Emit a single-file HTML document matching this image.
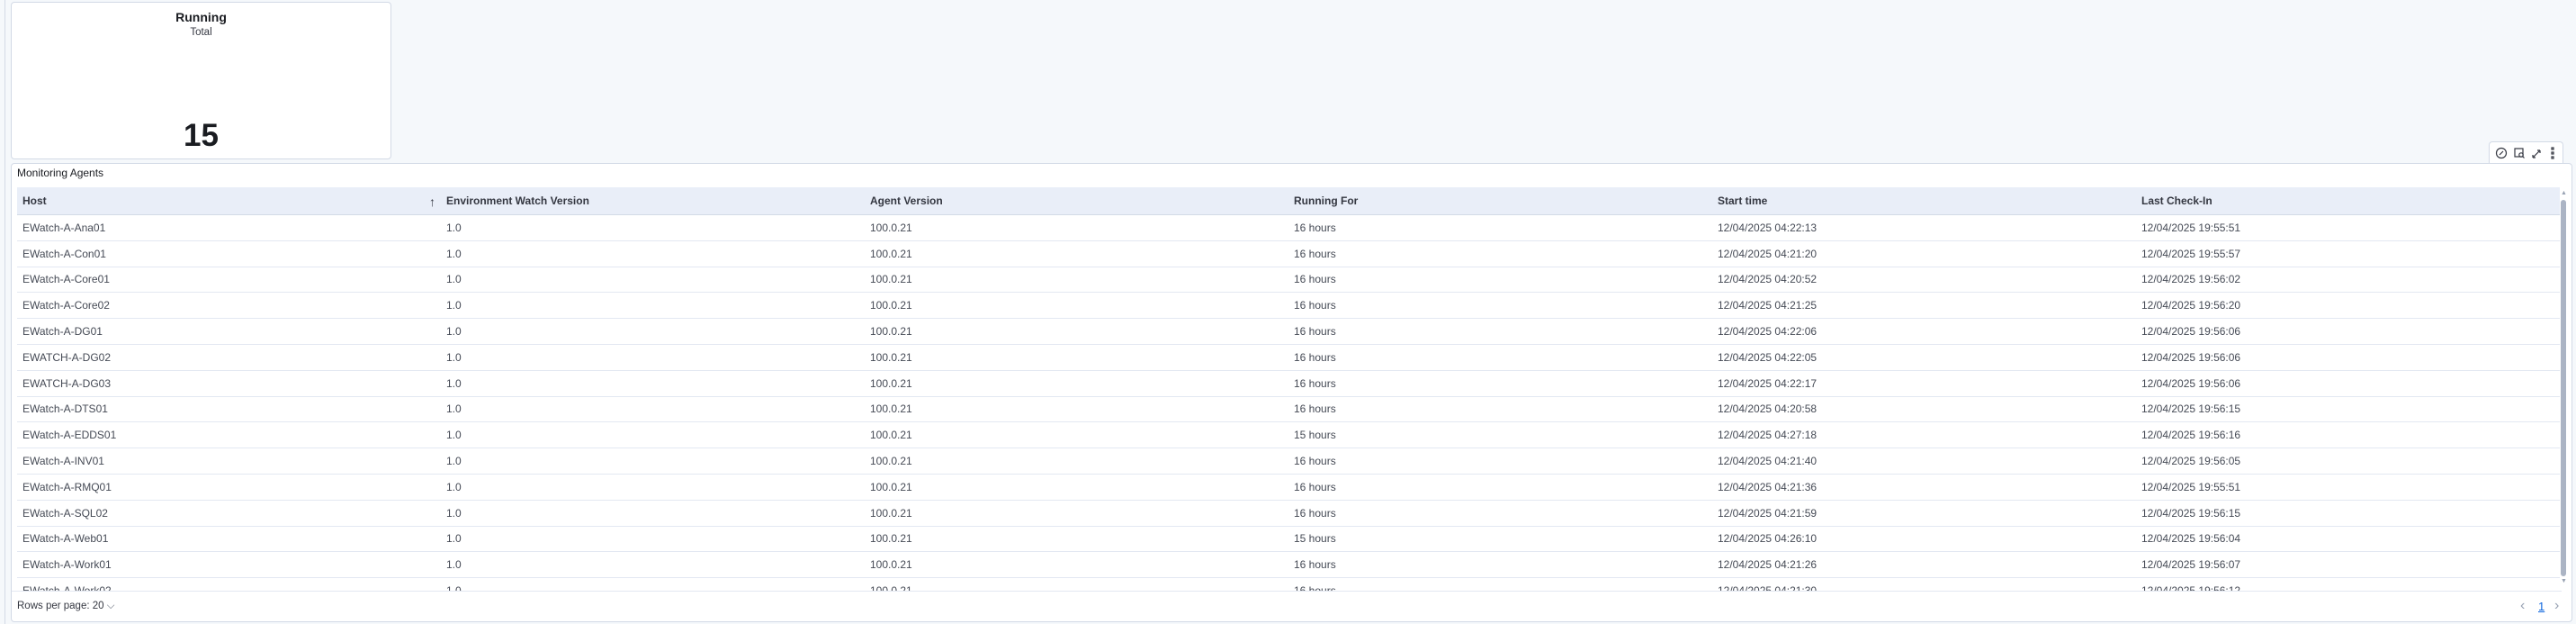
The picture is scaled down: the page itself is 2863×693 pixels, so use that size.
<!DOCTYPE html>
<html><head><meta charset="utf-8"><style>
*{box-sizing:border-box;margin:0;padding:0}
body{width:2863px;height:693px;background:#f5f8fb;font-family:"Liberation Sans",sans-serif;position:relative;overflow:hidden;color:#343741}
.edge{position:absolute;left:0;top:0;width:6px;height:693px;border-right:1px solid #d3dae6}
.card{position:absolute;left:12px;top:2px;width:423px;height:175px;background:#fff;border:1px solid #d3dae6;border-radius:4px;text-align:center}
.card .t{position:absolute;top:8px;width:100%;font-weight:bold;font-size:14px;color:#1a1c21}
.card .s{position:absolute;top:27px;width:100%;font-size:11.5px;color:#343741}
.card .n{position:absolute;top:128px;width:100%;font-weight:bold;font-size:35px;color:#1a1c21}
.tab{position:absolute;left:2766px;top:157px;width:83px;height:26px;background:#fff;border:1px solid #d3dae6;border-bottom:none;border-radius:4px 4px 0 0}
.panel{position:absolute;left:12px;top:181px;width:2847px;height:510px;background:#fff;border:1px solid #d3dae6;border-radius:4px;overflow:hidden}
.title{position:absolute;left:6px;top:3px;font-size:12px;color:#1a1c21}
.tbl{position:absolute;left:6px;top:26px;width:2826px;height:448px;overflow:hidden}
.row{height:28.8px;border-bottom:1px solid #e3e8f2;display:flex;align-items:center;font-size:12px;color:#454a55}
.hd{height:31px;background:#e9eef8;font-weight:bold;color:#343741;border-bottom:1px solid #d3dae6}
.row div{width:471px;padding-left:6px;flex:none;white-space:nowrap}
.sb{position:absolute;left:2833px;top:40px;width:6px;height:418px;background:#abb4c4;border-radius:3px}
.foot{position:absolute;left:0;top:474px;width:2834px;border-top:1px solid #e3e8f2;height:36px;font-size:11.5px;color:#343741}
</style></head><body>
<div class="edge"></div>
<div class="card"><div class="t">Running</div><div class="s">Total</div><div class="n">15</div></div>
<div class="tab"><svg width="83" height="26" viewBox="0 0 83 26" fill="none" stroke="#343741" stroke-width="1.2">
<circle cx="13" cy="12" r="5.5"/><path d="M11 14l4-4"/>
<rect x="28" y="7" width="9" height="9"/><circle cx="35" cy="14" r="2.2"/><path d="M36.5 15.5l2 2"/>
<path d="M48 17l8-8M48 17v-3M48 17h3M56 9h-3M56 9v3"/>
<rect x="69" y="6" width="2" height="2"/><rect x="69" y="11" width="2" height="2"/><rect x="69" y="16" width="2" height="2"/></svg></div>
<div class="panel">
<div class="title">Monitoring Agents</div>
<div class="tbl">
<div class="row hd"><div style="position:relative">Host<span style="position:absolute;right:6px;font-weight:normal;font-size:14px">↑</span></div><div>Environment Watch Version</div><div>Agent Version</div><div>Running For</div><div>Start time</div><div>Last Check-In</div></div>
<div class="row"><div>EWatch-A-Ana01</div><div>1.0</div><div>100.0.21</div><div>16 hours</div><div>12/04/2025 04:22:13</div><div>12/04/2025 19:55:51</div></div>
<div class="row"><div>EWatch-A-Con01</div><div>1.0</div><div>100.0.21</div><div>16 hours</div><div>12/04/2025 04:21:20</div><div>12/04/2025 19:55:57</div></div>
<div class="row"><div>EWatch-A-Core01</div><div>1.0</div><div>100.0.21</div><div>16 hours</div><div>12/04/2025 04:20:52</div><div>12/04/2025 19:56:02</div></div>
<div class="row"><div>EWatch-A-Core02</div><div>1.0</div><div>100.0.21</div><div>16 hours</div><div>12/04/2025 04:21:25</div><div>12/04/2025 19:56:20</div></div>
<div class="row"><div>EWatch-A-DG01</div><div>1.0</div><div>100.0.21</div><div>16 hours</div><div>12/04/2025 04:22:06</div><div>12/04/2025 19:56:06</div></div>
<div class="row"><div>EWATCH-A-DG02</div><div>1.0</div><div>100.0.21</div><div>16 hours</div><div>12/04/2025 04:22:05</div><div>12/04/2025 19:56:06</div></div>
<div class="row"><div>EWATCH-A-DG03</div><div>1.0</div><div>100.0.21</div><div>16 hours</div><div>12/04/2025 04:22:17</div><div>12/04/2025 19:56:06</div></div>
<div class="row"><div>EWatch-A-DTS01</div><div>1.0</div><div>100.0.21</div><div>16 hours</div><div>12/04/2025 04:20:58</div><div>12/04/2025 19:56:15</div></div>
<div class="row"><div>EWatch-A-EDDS01</div><div>1.0</div><div>100.0.21</div><div>15 hours</div><div>12/04/2025 04:27:18</div><div>12/04/2025 19:56:16</div></div>
<div class="row"><div>EWatch-A-INV01</div><div>1.0</div><div>100.0.21</div><div>16 hours</div><div>12/04/2025 04:21:40</div><div>12/04/2025 19:56:05</div></div>
<div class="row"><div>EWatch-A-RMQ01</div><div>1.0</div><div>100.0.21</div><div>16 hours</div><div>12/04/2025 04:21:36</div><div>12/04/2025 19:55:51</div></div>
<div class="row"><div>EWatch-A-SQL02</div><div>1.0</div><div>100.0.21</div><div>16 hours</div><div>12/04/2025 04:21:59</div><div>12/04/2025 19:56:15</div></div>
<div class="row"><div>EWatch-A-Web01</div><div>1.0</div><div>100.0.21</div><div>15 hours</div><div>12/04/2025 04:26:10</div><div>12/04/2025 19:56:04</div></div>
<div class="row"><div>EWatch-A-Work01</div><div>1.0</div><div>100.0.21</div><div>16 hours</div><div>12/04/2025 04:21:26</div><div>12/04/2025 19:56:07</div></div>
<div class="row"><div>EWatch-A-Work02</div><div>1.0</div><div>100.0.21</div><div>16 hours</div><div>12/04/2025 04:21:30</div><div>12/04/2025 19:56:12</div></div>
</div>
<div class="sb"></div>
<div style="position:absolute;left:2833px;top:29px;font-size:7px;color:#98a2b3">▲</div>
<div style="position:absolute;left:2833px;top:460px;font-size:7px;color:#98a2b3">▼</div>
<div class="foot"><span style="position:absolute;left:6px;top:10px">Rows per page: 20 <span style="color:#69707d">⌵</span></span>
<span style="position:absolute;left:2788px;top:7px;color:#98a2b3;font-size:16px">‹</span>
<span style="position:absolute;left:2808px;top:9px;color:#0b64dd;text-decoration:underline;font-size:13px">1</span>
<span style="position:absolute;left:2826px;top:7px;color:#98a2b3;font-size:16px">›</span></div>
</div>
</body></html>
